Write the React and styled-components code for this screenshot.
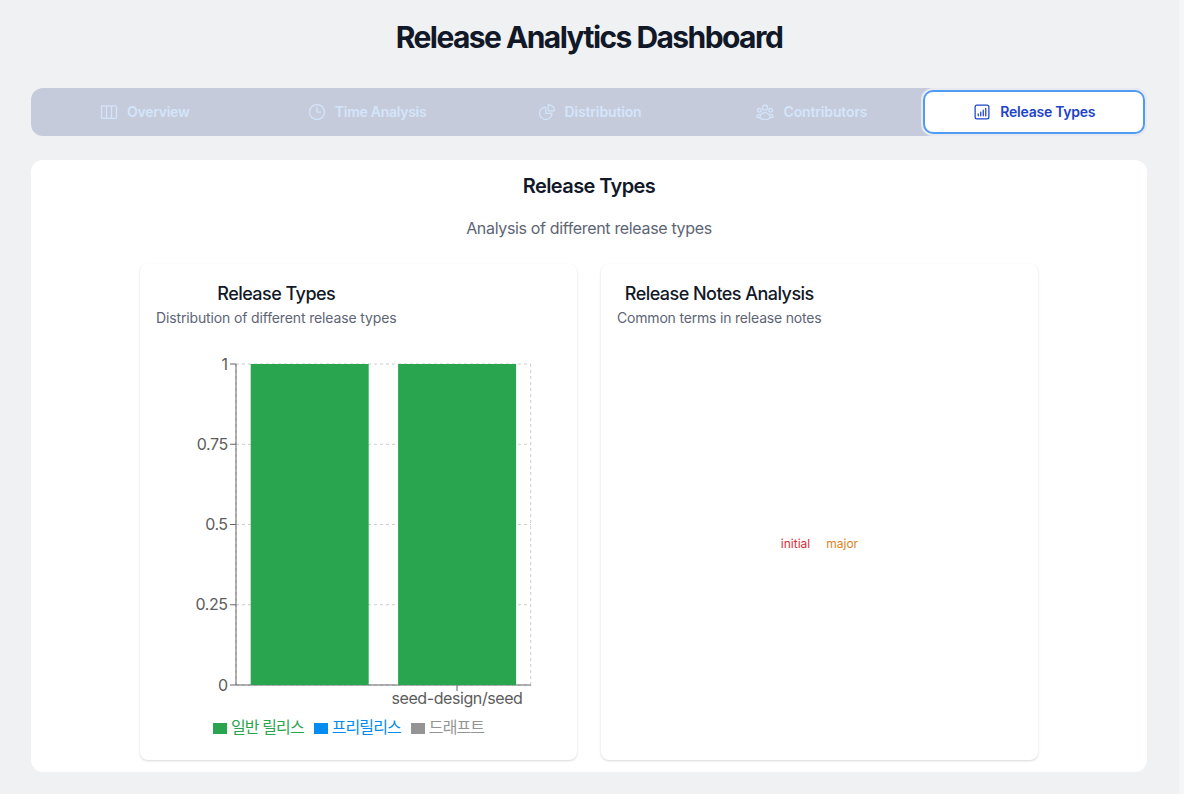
import React from "react";
import styled, { createGlobalStyle } from "styled-components";
import {
  HiOutlineViewColumns,
  HiOutlineClock,
  HiOutlineChartPie,
  HiOutlineUserGroup,
  HiOutlineChartBarSquare,
} from "react-icons/hi2";

const GlobalStyle = createGlobalStyle`
  *, *::before, *::after { box-sizing: border-box; }
  body {
    margin: 0;
    background: #f0f1f3;
    color: #111827;
    font-family: Inter, "Noto Sans CJK KR", sans-serif;
    font-size: 16px;
    line-height: 24px;
  }
  h1, h2, h3, p { margin: 0; }
`;

const Screen = styled.div`
  display: flex;
  height: 794px;
  overflow: hidden;
`;

const Page = styled.main`
  flex: 1;
  padding: 16px 32px 0 31px;
`;

const Gutter = styled.div`
  width: 5px;
  background: #f5f6f7;
`;

const PageTitle = styled.h1`
  height: 72px;
  padding-top: 3px;
  text-align: center;
  font-size: 30px;
  line-height: 36px;
  font-weight: 700;
  letter-spacing: -1.57px;
`;

const TabList = styled.nav`
  display: flex;
  gap: 4px;
  padding: 4px;
  border-radius: 12px;
  background: #c6cbdc;
`;

const Tab = styled.button`
  flex: 1 1 0;
  display: flex;
  align-items: center;
  justify-content: center;
  gap: 8px;
  height: 40px;
  padding: 0;
  border: 0;
  border-radius: 8px;
  font: 600 14px/20px Inter, sans-serif;
  letter-spacing: ${(p) => p.$track || 0}px;
  color: ${(p) => (p.$active ? "#1d44c8" : "#d3e5fa")};
  background: ${(p) => (p.$active ? "#fff" : "transparent")};
  box-shadow: ${(p) =>
    p.$active ? "0 0 0 2px #4f9cf3, 0 0 0 4px rgba(255, 255, 255, 0.6)" : "none"};

  svg { width: 20px; height: 20px; flex: none; }
`;

const Panel = styled.section`
  height: 612px;
  margin-top: 24px;
  padding-top: 12px;
  border-radius: 12px;
  background: #fff;
  text-align: center;
`;

const PanelTitle = styled.h2`
  font-size: 20px;
  line-height: 28px;
  font-weight: 600;
  letter-spacing: -0.6px;
`;

const PanelText = styled.p`
  margin-top: 16px;
  color: #5d6575;
  letter-spacing: -0.34px;
`;

const Cards = styled.div`
  display: flex;
  justify-content: center;
  gap: 24px;
  margin-top: 24px;
`;

const Card = styled.article`
  width: 437px;
  height: 496px;
  padding: 16px;
  border-radius: 8px;
  background: #fff;
  box-shadow: 0 1px 3px rgba(0, 0, 0, 0.1), 0 1px 2px rgba(0, 0, 0, 0.06);
  display: flex;
  flex-direction: column;
  align-items: flex-start;
`;

const CardHead = styled.header`
  height: 64px;
  text-align: center;
`;

const CardTitle = styled.h3`
  font-size: 18px;
  line-height: 28px;
  font-weight: 500;
  letter-spacing: -0.54px;
`;

const CardText = styled.p`
  font-size: 14px;
  line-height: 20px;
  color: #5d6575;
  letter-spacing: ${(p) => p.$track || 0}px;
`;

const Chart = styled.svg`
  display: block;
  flex: none;
`;

const AxisLabel = styled.text`
  fill: #5c5c5c;
  font-size: 16px;
  letter-spacing: -0.42px;
`;

const Legend = styled.div`
  display: flex;
  gap: 10px;
  padding-left: 57px;
  margin-top: 2px;
`;

const LegendItem = styled.span`
  display: flex;
  align-items: center;
  gap: 4px;
  line-height: 24px;
  white-space: nowrap;
  letter-spacing: -0.9px;
  color: ${(p) => p.$color};

  &::before {
    content: "";
    width: 14px;
    height: 11px;
    margin-top: 2px;
    background: ${(p) => p.$color};
  }
`;

const Words = styled.div`
  flex: 1;
  align-self: stretch;
  display: flex;
  align-items: center;
  justify-content: center;
  gap: 16px;
  font-size: 12px;
  line-height: 16px;
`;

const Word = styled.span`
  color: ${(p) => p.$color};
`;

const tabs = [
  { label: "Overview", Icon: HiOutlineViewColumns, track: -0.25 },
  { label: "Time Analysis", Icon: HiOutlineClock, track: -0.28 },
  { label: "Distribution", Icon: HiOutlineChartPie, track: -0.15 },
  { label: "Contributors", Icon: HiOutlineUserGroup, track: -0.14 },
  { label: "Release Types", Icon: HiOutlineChartBarSquare, track: -0.25, active: true },
];

const ticks = [
  ["1", 20], ["0.75", 100.25], ["0.5", 180.5], ["0.25", 260.75], ["0", 341],
];

function ReleaseChart() {
  return (
    <Chart width="405" height="369" viewBox="0 0 405 369">
      <g stroke="#ccc" strokeDasharray="3 3">
        {ticks.map(([t, y]) => <line key={t} x1="80" x2="375" y1={y} y2={y} />)}
        <line x1="80" x2="80" y1="20" y2="341" />
        <line x1="374.7" x2="374.7" y1="20" y2="341" />
      </g>
      <g stroke="#666">
        <line x1="80" x2="80" y1="20" y2="341" />
        <line x1="80" x2="375" y1="341" y2="341" />
        <line x1="301" x2="301" y1="341" y2="347" />
        {ticks.map(([t, y]) => <line key={t} x1="74" x2="80" y1={y} y2={y} />)}
      </g>
      <rect x="94.7" y="20" width="118" height="321" fill="#2aa54f" />
      <rect x="242.1" y="20" width="118" height="321" fill="#2aa54f" />
      {ticks.map(([t, y]) => (
        <AxisLabel key={t} x="71.7" y={y + 5.7} textAnchor="end">{t}</AxisLabel>
      ))}
      <AxisLabel x="301" y="360" textAnchor="middle">seed-design/seed</AxisLabel>
    </Chart>
  );
}

export default function App() {
  return (
    <Screen>
      <GlobalStyle />
      <Page>
        <PageTitle>Release Analytics Dashboard</PageTitle>
        <TabList>
          {tabs.map(({ label, Icon, active, track }) => (
            <Tab key={label} $active={active} $track={track}>
              <Icon />
              <span>{label}</span>
            </Tab>
          ))}
        </TabList>
        <Panel>
          <PanelTitle>Release Types</PanelTitle>
          <PanelText>Analysis of different release types</PanelText>
          <Cards>
            <Card>
              <CardHead>
                <CardTitle>Release Types</CardTitle>
                <CardText $track={-0.14}>Distribution of different release types</CardText>
              </CardHead>
              <ReleaseChart />
              <Legend>
                <LegendItem $color="#2aa54f">일반 릴리스</LegendItem>
                <LegendItem $color="#028bf0">프리릴리스</LegendItem>
                <LegendItem $color="#949494">드래프트</LegendItem>
              </Legend>
            </Card>
            <Card>
              <CardHead>
                <CardTitle>Release Notes Analysis</CardTitle>
                <CardText $track={-0.19}>Common terms in release notes</CardText>
              </CardHead>
              <Words>
                <Word $color="#d82b3a">initial</Word>
                <Word $color="#dc8425">major</Word>
              </Words>
            </Card>
          </Cards>
        </Panel>
      </Page>
      <Gutter />
    </Screen>
  );
}
